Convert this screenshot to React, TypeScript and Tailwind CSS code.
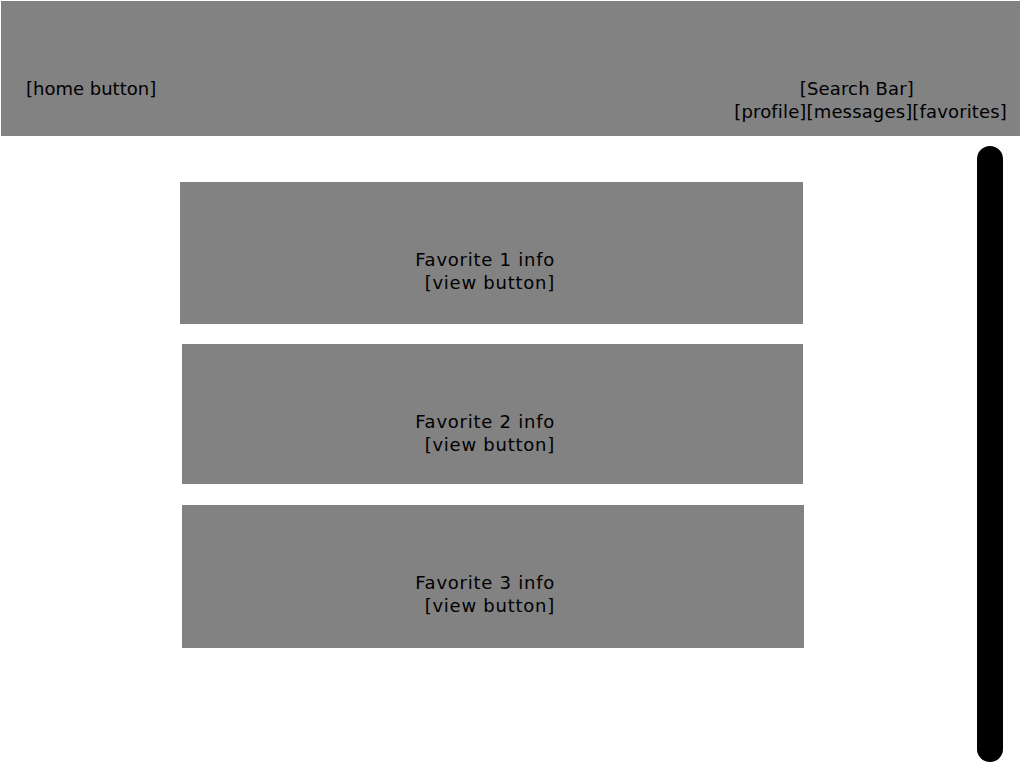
const cards = [
  { id: 1, box: "ml-[180px] mt-[46px] w-[623px] h-[142px]", pad: "pr-[248px]" },
  { id: 2, box: "ml-[182px] mt-[20px] w-[621px] h-[140px]", pad: "pr-[248px]" },
  { id: 3, box: "ml-[182px] mt-[21px] w-[622px] h-[143px]", pad: "pr-[249px]" },
];

const App = () => {
  return (
    <div className="w-[1024px] h-[768px] overflow-hidden bg-white text-black text-[18px] leading-[23px] font-['DejaVu_Sans',sans-serif]">
      <header className="mt-px ml-px w-[1019px] h-[135px] bg-[#828282] flex items-start justify-between pt-[76px] pl-[25px] pr-[13px]">
        <span>[home button]</span>
        <div className="flex flex-col items-end tracking-[0.15px]">
          <span className="mr-[93px]">[Search Bar]</span>
          <span>[profile][messages][favorites]</span>
        </div>
      </header>

      <div className="flex">
        <main className="flex-1 flex flex-col">
          {cards.map((c) => (
            <section key={c.id} className={`${c.box} bg-[#828282] pt-[66px] ${c.pad} flex justify-end`}>
              <div className="text-right tracking-[0.75px]">
                <div>Favorite {c.id} info</div>
                <div>[view button]</div>
              </div>
            </section>
          ))}
        </main>
        <div className="mt-[10px] mr-[21px] w-[26px] h-[616px] rounded-full bg-black" />
      </div>
    </div>
  );
};

export default App;
